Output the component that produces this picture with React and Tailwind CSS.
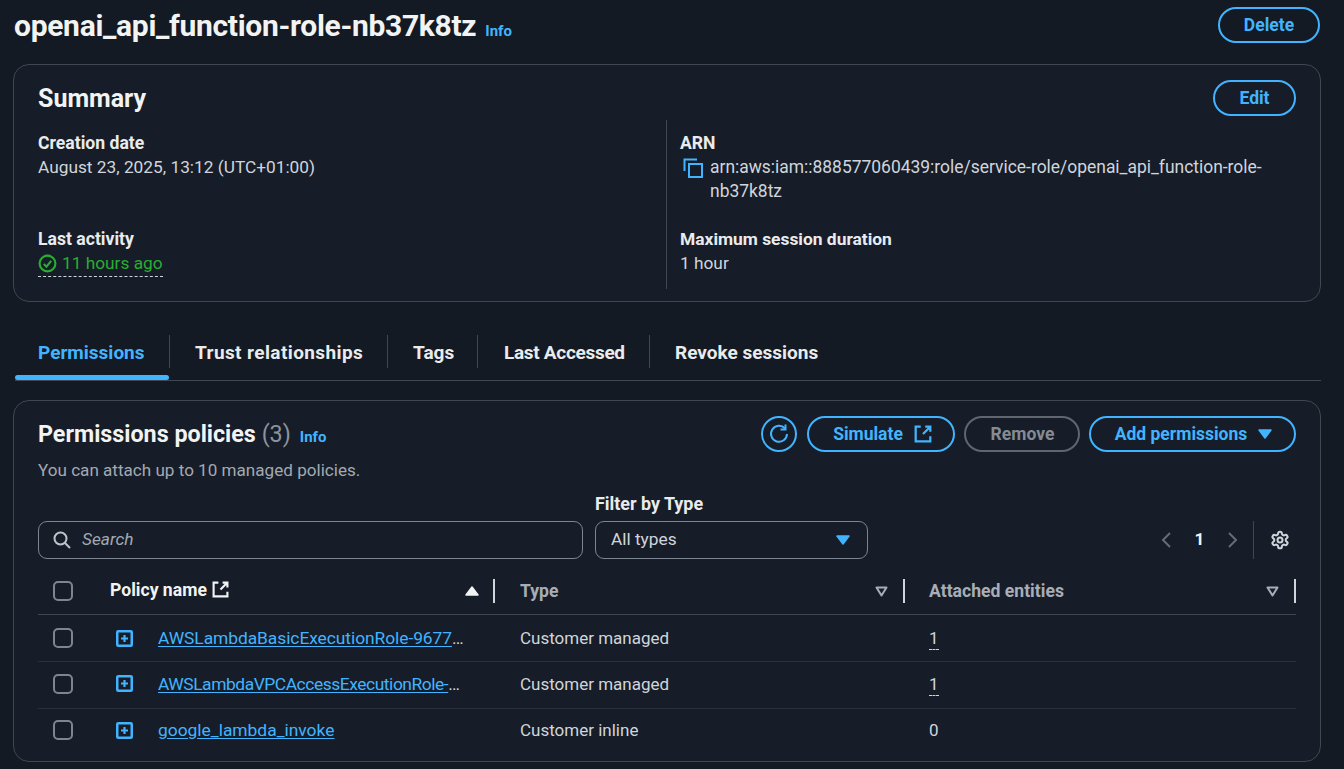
import React from "react";

const blue = "text-[#42b4ff]";

function Btn({ children, className = "" }) {
  return (
    <button className={`h-[36px] rounded-[18px] border-2 border-[#42b4ff] flex items-center justify-center text-[17.5px] font-bold text-[#42b4ff] ${className}`}>
      {children}
    </button>
  );
}

function External({ color = "#42b4ff", size = 18 }) {
  return (
    <svg width={size} height={size} viewBox="0 0 16 16" fill="none" stroke={color} strokeWidth="2">
      <path d="M6 1.5H1.5v13h13V10" />
      <path d="M10 1.5h4.5V6M14.5 1.5L8 8" />
    </svg>
  );
}

function Check() {
  return <div className="w-[20px] h-[20px] rounded-[5px] border-2 border-[#7d8590] shrink-0" />;
}

function Caret({ up, color = "#42b4ff", w = 14, h = 10 }) {
  return (
    <svg width={w} height={h} viewBox="0 0 14 10">
      <path d={up ? "M7 1L13 9H1Z" : "M1 1H13L7 9Z"} fill={color} stroke={color} strokeWidth="1.5" strokeLinejoin="round" />
    </svg>
  );
}

function SortOff() {
  return (
    <svg width="13" height="11" viewBox="0 0 13 11" fill="none" stroke="#a7aeb8" strokeWidth="2">
      <path d="M1.5 1.5H11.5L6.5 9.5Z" strokeLinejoin="round" />
    </svg>
  );
}

function Expand() {
  return (
    <svg width="17" height="17" viewBox="0 0 17 17" className="shrink-0">
      <rect x="1.25" y="1.25" width="14.5" height="14.5" rx="1" fill="none" stroke="#42b4ff" strokeWidth="2.5" />
      <path d="M8.5 5v7M5 8.5h7" stroke="#42b4ff" strokeWidth="2.2" />
    </svg>
  );
}

function Tab({ children, active, last, className = "" }) {
  return (
    <div className={`h-[33px] pt-[2px] flex items-center text-[19px] font-bold ${active ? blue : "text-[#e9ebed]"} ${last ? "" : "border-r border-[#414750]"} ${className}`}>
      {children}
    </div>
  );
}

function Row({ name, more, type, count, link, last, className = "", nameClass = "" }) {
  return (
    <div className={`grid grid-cols-[47px_410px_410px_391px] items-center text-[17px] text-[#d1d5db] ${last ? "h-[46px]" : "h-[47px] border-b border-[#2a303a]"} ${className}`}>
      <div className="pl-[15px]"><Check /></div>
      <div className="flex items-center pl-[31px] min-w-0">
        <Expand />
        <span className="ml-[25px] w-[306px] whitespace-nowrap text-[17.4px] text-[#d1d5db]">
          <span className={`${blue} underline underline-offset-2 ${nameClass}`}>{name}</span>{more ? "…" : ""}
        </span>
      </div>
      <div className="pl-[25px]">{type}</div>
      <div className="pl-[24px]">
        {link ? <span className="border-b border-dashed border-[#d1d5db] pb-[1px]">{count}</span> : count}
      </div>
    </div>
  );
}

export default function App() {
  return (
    <div className="w-[1344px] h-[769px] overflow-hidden bg-[#131a23] pl-[13px] pr-[23px] text-[17.3px] leading-[24px] text-[#d1d5db]" style={{ fontFamily: "Roboto, 'Liberation Sans', sans-serif" }}>
      {/* Page header */}
      <div className="h-[64px] pt-[7px] flex items-start justify-between pr-px pl-px">
        <div className="flex items-baseline h-[36px]">
          <h1 className="text-[30px] leading-[38px] font-bold text-[#f2f3f3] tracking-[-0.01em]">openai_api_function-role-nb37k8tz</h1>
          <span className={`ml-[9px] text-[15px] font-bold ${blue}`}>Info</span>
        </div>
        <Btn className="w-[102px]">Delete</Btn>
      </div>

      {/* Summary */}
      <section className="h-[238px] rounded-[16px] border border-[#414750] bg-[#161d28] pl-[24px] pr-[24px] pt-[15px]">
        <div className="flex items-start justify-between h-[40px]">
          <h2 className="text-[25px] leading-[38px] font-bold text-[#f2f3f3]">Summary</h2>
          <Btn className="w-[83px]">Edit</Btn>
        </div>
        <div className="grid grid-cols-[629px_1fr] h-[169px]">
          <div className="border-r border-[#414750] pt-[11px]">
            <div className="font-bold text-[17.6px] text-[#e9ebed] h-[24px]">Creation date</div>
            <div className="h-[72px]">August 23, 2025, 13:12 (UTC+01:00)</div>
            <div className="font-bold text-[17.6px] text-[#e9ebed] h-[24px]">Last activity</div>
            <div className="flex items-center gap-[5px] w-max text-[#29ad32] border-b border-dashed border-[#d1d5db] h-[26px] pb-[1px]">
              <svg width="19" height="19" viewBox="0 0 18 18" fill="none" stroke="#29ad32" strokeWidth="2">
                <circle cx="9" cy="9" r="7.5" />
                <path d="M5.5 9.5l2.5 2.5 4.5-5.5" />
              </svg>
              11 hours ago
            </div>
          </div>
          <div className="pl-[13px] pt-[11px]">
            <div className="font-bold text-[17.6px] text-[#e9ebed] h-[24px]">ARN</div>
            <div className="flex h-[72px]">
              <svg className="ml-[3px] mt-[3px] shrink-0" width="20" height="20" viewBox="0 0 20 20" fill="none" stroke="#42b4ff" strokeWidth="2">
                <rect x="6" y="6" width="13" height="13" />
                <path d="M1.5 13V1.5H14" />
              </svg>
              <div className="ml-[7px] w-[570px] text-[17.45px]">arn:aws:iam::888577060439:role/service-role/openai_api_function-role-<br />nb37k8tz</div>
            </div>
            <div className="font-bold text-[17.4px] text-[#e9ebed] h-[24px]">Maximum session duration</div>
            <div>1 hour</div>
          </div>
        </div>
      </section>

      {/* Tabs */}
      <div className="mt-[33px] ml-[2px] h-[46px] border-b border-[#414750] relative flex items-start">
        <Tab active className="w-[155px] pl-[23px]">Permissions</Tab>
        <Tab className="w-[218px] pl-[25px] tracking-[0.4px]">Trust relationships</Tab>
        <Tab className="w-[90px] pl-[25px]">Tags</Tab>
        <Tab className="w-[172px] pl-[26px] tracking-[-0.3px]">Last Accessed</Tab>
        <Tab last className="pl-[25px]">Revoke sessions</Tab>
        <div className="absolute left-0 bottom-0 w-[154px] h-[5px] rounded-[3px] bg-[#42b4ff]" />
      </div>

      {/* Policies */}
      <section className="mt-[19px] h-[362px] rounded-[16px] border border-[#414750] bg-[#161d28] pl-[24px] pr-[24px] pt-[15px]">
        <div className="flex items-start justify-between h-[40px]">
          <div className="flex items-baseline pt-[2px]">
            <h2 className="text-[23.3px] leading-[32px] font-bold text-[#f2f3f3]">Permissions policies <span className="font-normal text-[#8d939c]">(3)</span></h2>
            <span className={`ml-[9px] text-[15px] font-bold ${blue}`}>Info</span>
          </div>
          <div className="flex items-center">
            <button className="w-[36px] h-[36px] rounded-full border-2 border-[#42b4ff] flex items-center justify-center">
              <svg width="20" height="20" viewBox="0 0 20 20" fill="none" stroke="#42b4ff" strokeWidth="2">
                <path d="M16 4.5A8 8 0 1 0 18 10" />
                <path d="M11.5 4.5H16.5V-0.5" transform="translate(0 1)" />
              </svg>
            </button>
            <Btn className="w-[148px] ml-[10px] gap-[11px] pl-[3px]">Simulate <External /></Btn>
            <button className="ml-[9px] w-[116px] h-[36px] pl-[1px] rounded-[18px] border-2 border-[#5f6670] text-[17.5px] font-bold text-[#858b94]">Remove</button>
            <Btn className="w-[207px] ml-[9px] gap-[11px] pl-[2px]">Add permissions <Caret /></Btn>
          </div>
        </div>
        <div className="text-[#a3a9b2] text-[17.1px] h-[24px] mt-[2px]">You can attach up to 10 managed policies.</div>

        <div className="flex items-end mt-[11px] h-[66px]">
          <div className="w-[545px] h-[38px] rounded-[9px] border border-[#7d8590] flex items-center pl-[14px]">
            <svg width="18" height="18" viewBox="0 0 18 18" fill="none" stroke="#c0c4ca" strokeWidth="2">
              <circle cx="7.5" cy="7.5" r="6" />
              <path d="M12 12l5 5" />
            </svg>
            <span className="ml-[11px] italic text-[#a3a9b2] -mt-[2px]">Search</span>
          </div>
          <div className="ml-[12px] w-[273px]">
            <div className="font-bold text-[17.9px] text-[#e9ebed] h-[27px] leading-[20px]">Filter by Type</div>
            <div className="h-[38px] rounded-[9px] border border-[#7d8590] flex items-center justify-between pl-[15px] pr-[17px]">
              <span className="-mt-[2px]">All types</span>
              <Caret />
            </div>
          </div>
          <div className="ml-auto h-[38px] flex items-center">
            <svg width="12" height="18" viewBox="0 0 12 18" fill="none" stroke="#656c76" strokeWidth="2"><path d="M10 2L3 9l7 7" /></svg>
            <span className="w-[55px] text-center font-bold text-[#f2f3f3] -mt-[2px]">1</span>
            <svg width="12" height="18" viewBox="0 0 12 18" fill="none" stroke="#656c76" strokeWidth="2"><path d="M2 2l7 7-7 7" /></svg>
            <div className="ml-[14px] h-[38px] border-l border-[#414750] pl-[16px] flex items-center pr-[6px]">
              <svg width="20" height="20" viewBox="0 0 24 24" fill="none" stroke="#d1d5db" strokeWidth="2.4" strokeLinejoin="round">
                <path d="M12.22 2h-.44a2 2 0 0 0-2 2v.18a2 2 0 0 1-1 1.73l-.43.25a2 2 0 0 1-2 0l-.15-.08a2 2 0 0 0-2.73.73l-.22.38a2 2 0 0 0 .73 2.73l.15.1a2 2 0 0 1 1 1.72v.51a2 2 0 0 1-1 1.74l-.15.09a2 2 0 0 0-.73 2.73l.22.38a2 2 0 0 0 2.73.73l.15-.08a2 2 0 0 1 2 0l.43.25a2 2 0 0 1 1 1.73V20a2 2 0 0 0 2 2h.44a2 2 0 0 0 2-2v-.18a2 2 0 0 1 1-1.73l.43-.25a2 2 0 0 1 2 0l.15.08a2 2 0 0 0 2.73-.73l.22-.39a2 2 0 0 0-.73-2.73l-.15-.08a2 2 0 0 1-1-1.74v-.5a2 2 0 0 1 1-1.74l.15-.09a2 2 0 0 0 .73-2.73l-.22-.38a2 2 0 0 0-2.73-.73l-.15.08a2 2 0 0 1-2 0l-.43-.25a2 2 0 0 1-1-1.73V4a2 2 0 0 0-2-2z" />
                <circle cx="12" cy="12" r="3" />
              </svg>
            </div>
          </div>
        </div>

        {/* Table head */}
        <div className="grid grid-cols-[47px_410px_410px_391px] h-[56px] items-center border-b border-[#414750] pt-[9px] text-[17.6px]">
          <div className="flex items-center h-[24px] pl-[15px]">
            <Check />
            <div className="ml-[12px] w-[1px] h-[24px] bg-[#5f6670]" />
          </div>
          <div className="flex items-center h-[24px] justify-between pl-[25px] border-r-2 border-[#d1d5db]">
            <span className="flex items-center gap-[5px] font-bold text-[#f2f3f3] -mt-[3px]">Policy name <External color="#f2f3f3" size={17} /></span>
            <span className="mr-[14px]"><Caret up color="#f2f3f3" /></span>
          </div>
          <div className="flex items-center h-[24px] justify-between pl-[25px] border-r-2 border-[#d1d5db]">
            <span className="font-bold text-[#a7aeb8]">Type</span>
            <span className="mr-[15px]"><SortOff /></span>
          </div>
          <div className="flex items-center h-[24px] justify-between pl-[24px] border-r-2 border-[#d1d5db]">
            <span className="font-bold text-[#a7aeb8]">Attached entities</span>
            <span className="mr-[15px]"><SortOff /></span>
          </div>
        </div>
        <Row name="AWSLambdaBasicExecutionRole-9677" more type="Customer managed" count="1" link nameClass="tracking-[-0.06px]" />
        <Row name="AWSLambdaVPCAccessExecutionRole-" more type="Customer managed" count="1" link className="pb-[3px]" nameClass="tracking-[-0.44px]" />
        <Row name="google_lambda_invoke" type="Customer inline" count="0" last className="pb-[4px]" />
      </section>
    </div>
  );
}
